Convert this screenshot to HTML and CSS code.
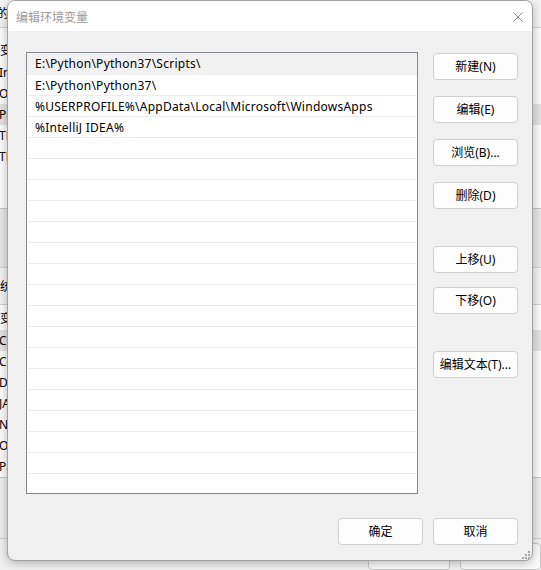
FILE: index.html
```html
<!DOCTYPE html>
<html lang="zh-CN">
<head>
<meta charset="utf-8">
<title>编辑环境变量</title>
<link rel="stylesheet" href="styles.css">
</head>
<body>
<div class="desktop">
  <div class="bgwin">
    <div class="bg-cap">的用户变量(U)</div>
    <div class="bg-list user">
      <div class="bg-head">变量</div>
      <div class="bg-row">IntelliJ IDEA</div>
      <div class="bg-row">OneDrive</div>
      <div class="bg-row sel">Path</div>
      <div class="bg-row">TEMP</div>
      <div class="bg-row">TMP</div>
    </div>
    <div class="bg-band"></div>
    <div class="bg-cap sys"><span class="cut">系</span>统变量(S)</div>
    <div class="bg-list system">
      <div class="bg-head">变量</div>
      <div class="bg-row sel">CLASSPATH</div>
      <div class="bg-row">ComSpec</div>
      <div class="bg-row">DriverData</div>
      <div class="bg-row">JAVA_HOME</div>
      <div class="bg-row">NUMBER_OF_PROCESSORS</div>
      <div class="bg-row">OS</div>
      <div class="bg-row">Path</div>
    </div>
    <div class="bg-band low"></div>
    <div class="bg-foot">
      <span class="bg-btn"></span>
      <span class="bg-btn"></span>
    </div>
  </div>

  <div class="dialog">
    <div class="titlebar">
      <span class="title">编辑环境变量</span>
      <svg class="close" width="10" height="10" viewBox="0 0 10 10" aria-hidden="true">
        <path d="M0.5 0.5 L9.5 9.5 M9.5 0.5 L0.5 9.5" stroke="#8a8a8a" stroke-width="1" fill="none"/>
      </svg>
    </div>
    <div class="body">
      <div class="main">
        <div class="list">
          <div class="row sel">E:\Python\Python37\Scripts\</div>
          <div class="row">E:\Python\Python37\</div>
          <div class="row">%USERPROFILE%\AppData\Local\Microsoft\WindowsApps</div>
          <div class="row">%IntelliJ IDEA%</div>
          <div class="row"></div>
          <div class="row"></div>
          <div class="row"></div>
          <div class="row"></div>
          <div class="row"></div>
          <div class="row"></div>
          <div class="row"></div>
          <div class="row"></div>
          <div class="row"></div>
          <div class="row"></div>
          <div class="row"></div>
          <div class="row"></div>
          <div class="row"></div>
          <div class="row"></div>
          <div class="row"></div>
          <div class="row"></div>
        </div>
        <div class="side">
          <button class="btn">新建(N)</button>
          <button class="btn">编辑(E)</button>
          <button class="btn">浏览(B)...</button>
          <button class="btn">删除(D)</button>
          <button class="btn group">上移(U)</button>
          <button class="btn tight">下移(O)</button>
          <button class="btn group">编辑文本(T)...</button>
        </div>
      </div>
      <div class="footer">
        <button class="btn">确定</button>
        <button class="btn">取消</button>
      </div>
      <svg class="grip" width="9" height="9" viewBox="0 0 9 9" aria-hidden="true">
        <rect x="7" y="1" width="2" height="2" fill="#a8a8a8"/>
        <rect x="4" y="4" width="2" height="2" fill="#a8a8a8"/>
        <rect x="7" y="4" width="2" height="2" fill="#a8a8a8"/>
        <rect x="1" y="7" width="2" height="2" fill="#a8a8a8"/>
        <rect x="4" y="7" width="2" height="2" fill="#a8a8a8"/>
        <rect x="7" y="7" width="2" height="2" fill="#a8a8a8"/>
      </svg>
    </div>
  </div>
</div>
</body>
</html>
```

FILE: styles.css
```css
* { box-sizing: border-box; }

html, body {
  margin: 0;
  padding: 0;
  width: 541px;
  height: 570px;
  overflow: hidden;
  background: #f0f0f0;
}

body {
  font-family: "Noto Sans", "Noto Sans CJK SC", sans-serif;
  font-size: 12px;
  color: #000;
}

.desktop {
  position: relative;
  width: 541px;
  height: 570px;
  overflow: hidden;
}

/* background window (partly hidden) */
.bgwin {
  position: absolute;
  inset: 0;
  background: #f0f0f0;
  display: flex;
  flex-direction: column;
  overflow: hidden;
  white-space: nowrap;
}

.bg-cap {
  height: 28px;
  line-height: 27px;
  padding-left: 0;
  margin-left: -3px;
  background: #f4f4f4;
  border-bottom: 1px solid #d2d2d2;
}

.bg-cap.sys {
  height: 37px;
  line-height: 38px;
  margin-left: -12px;
  background: #f2f2f2;
}

.bg-list {
  background: #fbfbfb;
  border-bottom: 1px solid #c4c4c4;
  padding-left: 0;
}

.bg-list.user {
  height: 185px;
  padding-top: 12px;
}

.bg-list.system {
  height: 175px;
  padding-top: 3px;
}

.bg-head {
  height: 22px;
  line-height: 22px;
}

.bg-row {
  height: 21px;
  line-height: 21px;
  margin-left: -1px;
}

.bg-row.sel {
  background: #e2e2e2;
}

.bg-band {
  height: 61px;
  background: #e6e6e6;
  border-bottom: 1px solid #d0d0d0;
}

.bg-band.low {
  height: 62px;
  background: #ececec;
}

.bg-foot {
  display: flex;
  gap: 10px;
  padding-left: 368px;
  padding-top: 4px;
}

.bg-btn {
  width: 85px;
  height: 27px;
  border: 1px solid #c8c8c8;
  border-radius: 4px;
  background: #fbfbfb;
}

/* dialog */
.dialog {
  position: absolute;
  left: 7px;
  top: 0;
  width: 526px;
  height: 561px;
  border: 1px solid #a3a3a3;
  border-radius: 8px;
  background: #f0f0f0;
  box-shadow: 0 2px 10px rgba(0, 0, 0, 0.28);
  overflow: hidden;
  display: flex;
  flex-direction: column;
}

.titlebar {
  height: 30px;
  background: #fff;
  display: flex;
  align-items: center;
  justify-content: space-between;
  padding-left: 8px;
  padding-right: 9px;
  flex: none;
}

.title {
  color: #9b9b9b;
  font-size: 12px;
  margin-top: 1px;
}

.close {
  display: block;
  margin-top: 1px;
}

.body {
  position: relative;
  flex: 1;
  padding: 21px 14px 15px 18px;
  display: flex;
  flex-direction: column;
}

.main {
  display: flex;
  gap: 15px;
}

.list {
  width: 392px;
  height: 442px;
  border: 1px solid #858890;
  background: #fff;
  padding-top: 1px;
  flex: none;
}

.row {
  height: 21px;
  line-height: 21px;
  padding-left: 7px;
  border-bottom: 1px solid #ececec;
  margin-left: 1px;
  white-space: nowrap;
  letter-spacing: 0.25px;
}

.row.sel {
  background: #f1f1f1;
  margin-left: 0;
  padding-left: 8px;
  margin-top: -1px;
  height: 22px;
  line-height: 22px;
}

.side {
  display: flex;
  flex-direction: column;
  gap: 16px;
  padding-top: 1px;
  width: 85px;
  flex: none;
}

.btn {
  width: 85px;
  height: 27px;
  padding: 0;
  border: 1px solid #d0d0d0;
  border-radius: 4px;
  background: #fdfdfd;
  font-family: "Noto Sans", "Noto Sans CJK SC", sans-serif;
  font-size: 12px;
  color: #000;
  line-height: 25px;
  text-align: center;
  white-space: nowrap;
}

.side .group {
  margin-top: 21px;
}

.side .tight {
  margin-top: -2px;
}

.footer {
  margin-top: 24px;
  display: flex;
  justify-content: flex-end;
  gap: 10px;
}

.grip {
  position: absolute;
  right: 2px;
  bottom: 1px;
}
```
